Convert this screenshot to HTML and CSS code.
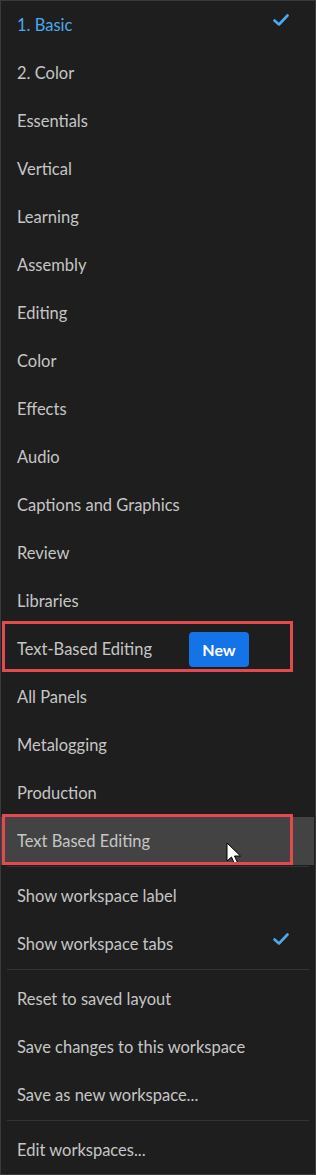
FILE: index.html
```html
<!DOCTYPE html>
<html>
<head>
<meta charset="utf-8">
<link rel="stylesheet" href="styles.css">
</head>
<body>
<div class="menu">
  <div class="item active"><span>1. Basic</span><svg class="check" viewBox="0 0 16 12"><path d="M1.5 6.5 L6 10.5 L14.5 1.5" /></svg></div>
  <div class="item"><span>2. Color</span></div>
  <div class="item"><span>Essentials</span></div>
  <div class="item"><span>Vertical</span></div>
  <div class="item"><span>Learning</span></div>
  <div class="item"><span>Assembly</span></div>
  <div class="item"><span>Editing</span></div>
  <div class="item"><span>Color</span></div>
  <div class="item"><span>Effects</span></div>
  <div class="item"><span>Audio</span></div>
  <div class="item"><span>Captions and Graphics</span></div>
  <div class="item"><span>Review</span></div>
  <div class="item"><span>Libraries</span></div>
  <div class="item boxed boxed-a"><span class="label-fixed">Text-Based Editing</span><span class="badge">New</span></div>
  <div class="item"><span>All Panels</span></div>
  <div class="item"><span>Metalogging</span></div>
  <div class="item"><span>Production</span></div>
  <div class="item hover boxed boxed-b"><span>Text Based Editing</span>
    <svg class="cursor" viewBox="0 0 18 26"><path d="M1 1 L1 19 L5.5 15 L9 23 L12 21.5 L8.5 14 L14.5 14 Z" /></svg>
  </div>
  <div class="sep first"></div>
  <div class="item"><span>Show workspace label</span></div>
  <div class="item"><span>Show workspace tabs</span><svg class="check" viewBox="0 0 16 12"><path d="M1.5 6.5 L6 10.5 L14.5 1.5" /></svg></div>
  <div class="sep"></div>
  <div class="item"><span>Reset to saved layout</span></div>
  <div class="item"><span>Save changes to this workspace</span></div>
  <div class="item"><span>Save as new workspace...</span></div>
  <div class="sep"></div>
  <div class="item"><span>Edit workspaces...</span></div>
</div>
</body>
</html>
```
FILE: styles.css
```css
html, body {
  margin: 0;
  padding: 0;
  background: #1e1e1e;
}
.menu {
  width: 314px;
  height: 1173px;
  border: 1px solid #3a3a3a;
  background: #1e1e1e;
  font-family: "Lato", "Open Sans", sans-serif;
  font-size: 16.5px;
  color: #c6c6c6;
  overflow: hidden;
}
.item {
  position: relative;
  height: 48px;
  display: flex;
  align-items: center;
  padding-left: 16px;
  padding-bottom: 1px;
  box-sizing: border-box;
}
.item.active {
  color: #4ba9ea;
}
.check {
  position: absolute;
  right: 26px;
  top: 13px;
  width: 16px;
  height: 12px;
  fill: none;
  stroke: #4aaaf0;
  stroke-width: 2.6;
  stroke-linecap: round;
  stroke-linejoin: round;
}
.label-fixed {
  width: 172px;
}
.badge {
  background: #1473e6;
  color: #fff;
  font-weight: 700;
  font-size: 16px;
  border-radius: 4px;
  width: 60px;
  height: 35px;
  margin-top: 1px;
  display: flex;
  align-items: center;
  justify-content: center;
}
.hover {
  background: #434343;
  margin-right: 1px;
}
.boxed::after {
  content: "";
  position: absolute;
  left: 1px;
  width: 291px;
  border: 3px solid #e24a4f;
  box-sizing: border-box;
  pointer-events: none;
}
.boxed-a::after {
  top: -4px;
  height: 51px;
}
.boxed-b::after {
  top: -3px;
  height: 51px;
}
.cursor {
  position: absolute;
  left: 225px;
  top: 25px;
  width: 18px;
  height: 26px;
  fill: #fff;
  stroke: #000;
  stroke-width: 1;
}
.sep {
  height: 1px;
  background: #333;
  margin: 1px 6px 5px 6px;
}
.sep.first {
  margin-top: 1px;
}
```
